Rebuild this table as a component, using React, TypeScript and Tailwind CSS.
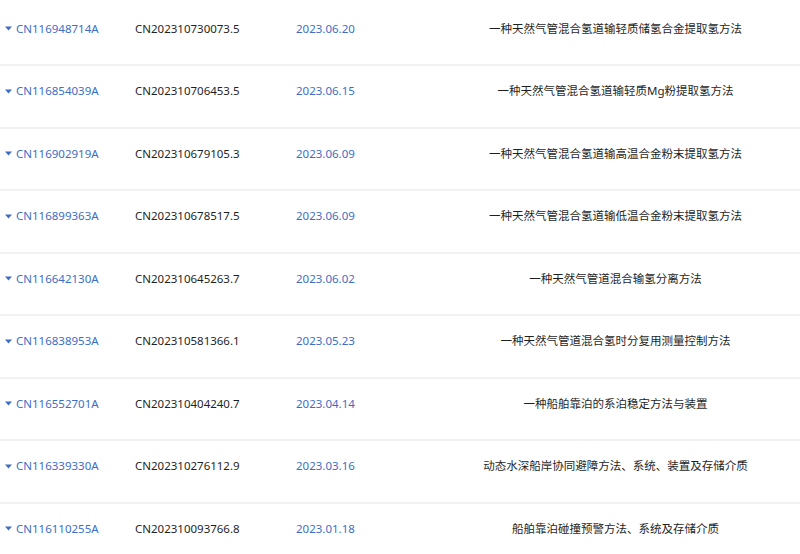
const rows = [
  ['CN116948714A', 'CN202310730073.5', '2023.06.20', '一种天然气管混合氢道输轻质储氢合金提取氢方法'],
  ['CN116854039A', 'CN202310706453.5', '2023.06.15', '一种天然气管混合氢道输轻质Mg粉提取氢方法'],
  ['CN116902919A', 'CN202310679105.3', '2023.06.09', '一种天然气管混合氢道输高温合金粉末提取氢方法'],
  ['CN116899363A', 'CN202310678517.5', '2023.06.09', '一种天然气管混合氢道输低温合金粉末提取氢方法'],
  ['CN116642130A', 'CN202310645263.7', '2023.06.02', '一种天然气管道混合输氢分离方法'],
  ['CN116838953A', 'CN202310581366.1', '2023.05.23', '一种天然气管道混合氢时分复用测量控制方法'],
  ['CN116552701A', 'CN202310404240.7', '2023.04.14', '一种船舶靠泊的系泊稳定方法与装置'],
  ['CN116339330A', 'CN202310276112.9', '2023.03.16', '动态水深船岸协同避障方法、系统、装置及存储介质'],
  ['CN116110255A', 'CN202310093766.8', '2023.01.18', '船舶靠泊碰撞预警方法、系统及存储介质'],
];

function Caret() {
  return (
    <svg width="7" height="5" viewBox="0 0 7 5" className="mr-[4px] shrink-0">
      <path d="M0 0.5h7L3.5 4.5z" fill="#3d6ec4" />
    </svg>
  );
}

export default function App() {
  return (
    <div
      className="w-[800px] h-[554px] overflow-hidden bg-white pt-[3.5px] text-[11.5px] text-[#1f1f1f]"
      style={{ fontFamily: '"Noto Sans", "Noto Sans CJK SC", sans-serif' }}
    >
      {rows.map(([pub, app, date, title], i) => {
        const last = i === rows.length - 1;
        return (
          <div
            key={pub}
            className={
              last
                ? 'border-b border-[#e3eaf5]'
                : 'border-b-2 border-[#f2f2f2] pb-[10.5px]'
            }
          >
            <div className="flex items-center h-[50px]">
              <div className="w-[135px] flex items-center pl-[5px] text-[#3d6ec4]">
                <Caret />
                <span>{pub}</span>
              </div>
              <div className="w-[161px]">{app}</div>
              <div className="w-[135px] text-[#3d6ec4]">{date}</div>
              <div className="flex-1 text-center">{title}</div>
            </div>
          </div>
        );
      })}
    </div>
  );
}
